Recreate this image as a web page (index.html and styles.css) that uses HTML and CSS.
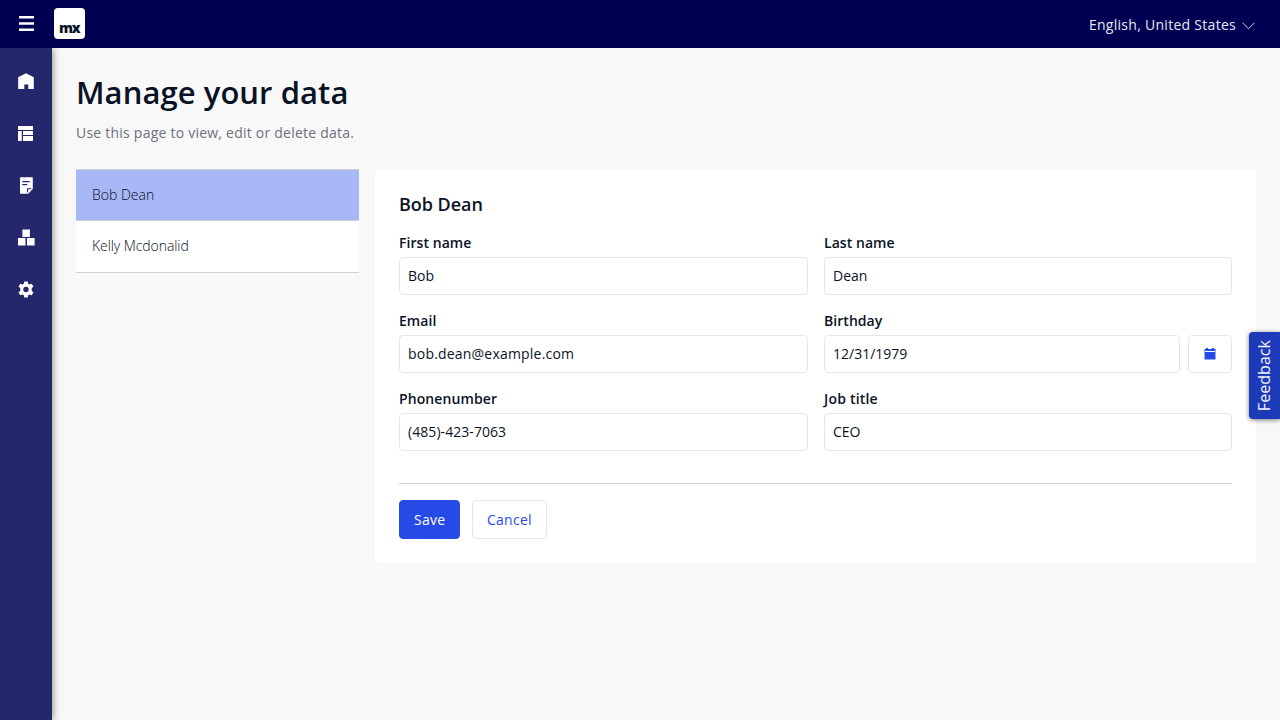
FILE: index.html
```html
<!DOCTYPE html>
<html lang="en">
<head>
<meta charset="utf-8">
<title>Manage your data</title>
<link rel="stylesheet" href="styles.css">
</head>
<body>
<header class="topbar">
  <svg class="menu" viewBox="0 0 15 15"><path d="M0 0h15v2.5H0zM0 6.2h15v2.5H0zM0 12.4h15v2.5H0z"/></svg>
  <div class="logo"><span>mx</span></div>
  <div class="language">English, United States
    <svg class="chevron" viewBox="0 0 13 8"><path d="M.6 .8L6.5 6.8L12.4 .8"/></svg>
  </div>
</header>
<div class="shell">
  <nav class="sidebar">
    <a class="nav-item"><svg viewBox="0 0 18 18"><path d="M1.200 5.300L9 1.300l7.800 4V17h-5.500v-4.500h-4V17H1.200z"/></svg></a>
    <a class="nav-item"><svg viewBox="0 0 18 18"><path d="M1 2h15v4H1zM1 7h3.800v10H1zM6 7h10v4H6zM6 12h10v5H6z"/></svg></a>
    <a class="nav-item"><svg viewBox="0 0 18 18"><path fill-rule="evenodd" d="M4 1.300h10.800c.6 0 1 .4 1 1v10.700L11.200 17.700H4c-.6 0-1-.4-1-1V2.300c0-.6.4-1 1-1zM5.300 5v1.300h7.400V5zM5.300 8v1.200h5V8zM10 12.200v4.500l1-.8v-2.700h2.800l.9-1z"/></svg></a>
    <a class="nav-item"><svg viewBox="0 0 18 18"><path d="M5.400 1.500h7.500V9H5.400zM1 10h7.500v7.500H1zM10 10h7.600v7.500H10z"/></svg></a>
    <a class="nav-item"><svg viewBox="0 .5 18 18" transform="translate(0 1)"><path fill-rule="evenodd" d="M7.300 1h3.400l.5 2.200 1.300.8 2.200-.8 1.700 2.900-1.700 1.700v2.400l1.700 1.700-1.700 2.900-2.200-.8-1.300.8-.5 2.200H7.300l-.5-2.200-1.300-.8-2.200.8-1.700-2.900 1.700-1.700V7.800L1.600 6.100l1.700-2.900 2.200.8 1.300-.8zM9 6.300a2.700 2.700 0 1 0 0 5.400a2.700 2.700 0 0 0 0-5.400z"/></svg></a>
  </nav>
  <main class="content">
    <h1 class="title">Manage your data</h1>
    <p class="subtitle">Use this page to view, edit or delete data.</p>
    <div class="columns">
      <ul class="people">
        <li class="person selected">Bob Dean</li>
        <li class="person">Kelly Mcdonalid</li>
      </ul>
      <section class="card">
        <h2 class="card-title">Bob Dean</h2>
        <div class="fields">
          <div class="field"><div class="label">First name</div><div class="input">Bob</div></div>
          <div class="field"><div class="label">Last name</div><div class="input">Dean</div></div>
          <div class="field"><div class="label">Email</div><div class="input email">bob.dean@example.com</div></div>
          <div class="field"><div class="label">Birthday</div>
            <div class="date-row"><div class="input">12/31/1979</div>
              <div class="date-button"><svg viewBox="0 0 12 12"><path fill-rule="evenodd" d="M.5 1H2V0h2v1h4V0h2v1h1.500v10.500H.5zM1 3v1h10V3z"/></svg></div>
            </div>
          </div>
          <div class="field"><div class="label phone">Phonenumber</div><div class="input phone">(485)-423-7063</div></div>
          <div class="field"><div class="label job">Job title</div><div class="input">CEO</div></div>
        </div>
        <div class="actions">
          <div class="button primary">Save</div>
          <div class="button">Cancel</div>
        </div>
      </section>
    </div>
  </main>
</div>
<div class="feedback"><span>Feedback</span></div>
</body>
</html>
```
FILE: styles.css
```css
* { box-sizing: border-box; }
body {
  margin: 0;
  height: 720px;
  overflow: hidden;
  display: flex;
  flex-direction: column;
  background: #f8f8f8;
  color: #0a1326;
  font: 14px/20px "Open Sans", sans-serif;
}
.topbar {
  height: 48px;
  flex: none;
  display: flex;
  align-items: center;
  padding: 0 25px 0 19px;
  background: #000053;
  color: #e8e8f0;
}
.menu { width: 15px; height: 15px; margin-bottom: 1px; fill: #fff; }
.logo {
  width: 31px;
  height: 31px;
  margin: 0 0 1px 20px;
  border-radius: 4px;
  background: #fff;
  color: #0a1326;
  font: 800 14px/14px "Open Sans", sans-serif;
  letter-spacing: -1.3px;
  padding: 13px 0 0 5px;
}
.language {
  margin-left: auto;
  display: flex;
  align-items: center;
  gap: 6px;
  padding-top: 2px;
  letter-spacing: .28px;
}
.chevron { width: 13px; height: 8px; margin-top: 1px; fill: none; stroke: #e8e8f0; stroke-width: .9; }
.shell { flex: 1; display: flex; }
.sidebar {
  width: 52px;
  flex: none;
  display: flex;
  flex-direction: column;
  padding-top: 7px;
  background: #24276c;
  box-shadow: 0 0 8px rgba(0, 0, 0, .5);
  clip-path: inset(0 -16px 0 0);
}
.nav-item { height: 52px; padding: 17px; }
.nav-item svg { display: block; width: 18px; height: 18px; fill: #fff; }
.content { flex: 1; padding: 24px; }
.title { margin: 0; font-size: 31px; line-height: 40px; font-weight: 600; letter-spacing: .06px; }
.subtitle { margin: 11px 0 0; line-height: 20px; color: #6c717e; letter-spacing: .23px; }
.columns { display: flex; align-items: flex-start; gap: 16px; margin-top: 26px; }
.people { width: 283px; margin: 0; padding: 0; list-style: none; border-bottom: 1px solid #ced0d3; }
.person {
  height: 51px;
  padding: 15px 16px;
  border-top: 1px solid #ced0d3;
  background: #fff;
  font-weight: 300;
}
.person:last-child { height: 52px; letter-spacing: -.08px; }
.person.selected { background: #a8b7f6; }
.card { flex: 1; height: 394px; padding: 23px 24px 24px; border-radius: 4px; background: #fff; }
.card-title { margin: 0; font-size: 18px; line-height: 24px; font-weight: 600; letter-spacing: -.05px; }
.fields { display: grid; grid-template-columns: 409px 408px; gap: 16px; margin-top: 17px; }
.label { line-height: 20px; margin-bottom: 4px; font-weight: 600; letter-spacing: .05px; }
.label.phone { letter-spacing: .1px; }
.label.job { letter-spacing: .2px; }
.input {
  flex: 1;
  height: 38px;
  padding: 8px;
  border: 1px solid #e7e7e9;
  border-radius: 4px;
  background: #fff;
}
.input.email { letter-spacing: .2px; }
.input.phone { letter-spacing: .06px; }
.date-row { display: flex; gap: 8px; }
.date-button {
  width: 44px;
  height: 38px;
  display: flex;
  align-items: center;
  justify-content: center;
  border: 1px solid #e7e7e9;
  border-radius: 4px;
}
.date-button svg { width: 12px; height: 12px; fill: #264ae5; }
.actions { display: flex; gap: 12px; margin-top: 32px; padding-top: 16px; border-top: 1px solid #ced0d3; }
.button {
  width: 75px;
  height: 39px;
  padding: 9px 14px;
  border: 1px solid #e7e7e9;
  border-radius: 4px;
  color: #264ae5;
  letter-spacing: .25px;
}
.button.primary { width: 61px; background: #264ae5; border-color: #264ae5; color: #fff; }
.feedback {
  position: absolute;
  right: 0;
  top: 332px;
  width: 31px;
  height: 87px;
  display: flex;
  align-items: center;
  justify-content: center;
  border-radius: 4px 0 0 4px;
  background: #1d3ab8;
  box-shadow: 0 1px 5px rgba(0, 0, 0, .5);
  color: #f0f2fb;
  font-size: 16px;
}
.feedback span { writing-mode: vertical-rl; transform: rotate(180deg); line-height: 31px; letter-spacing: .05px; }
```
